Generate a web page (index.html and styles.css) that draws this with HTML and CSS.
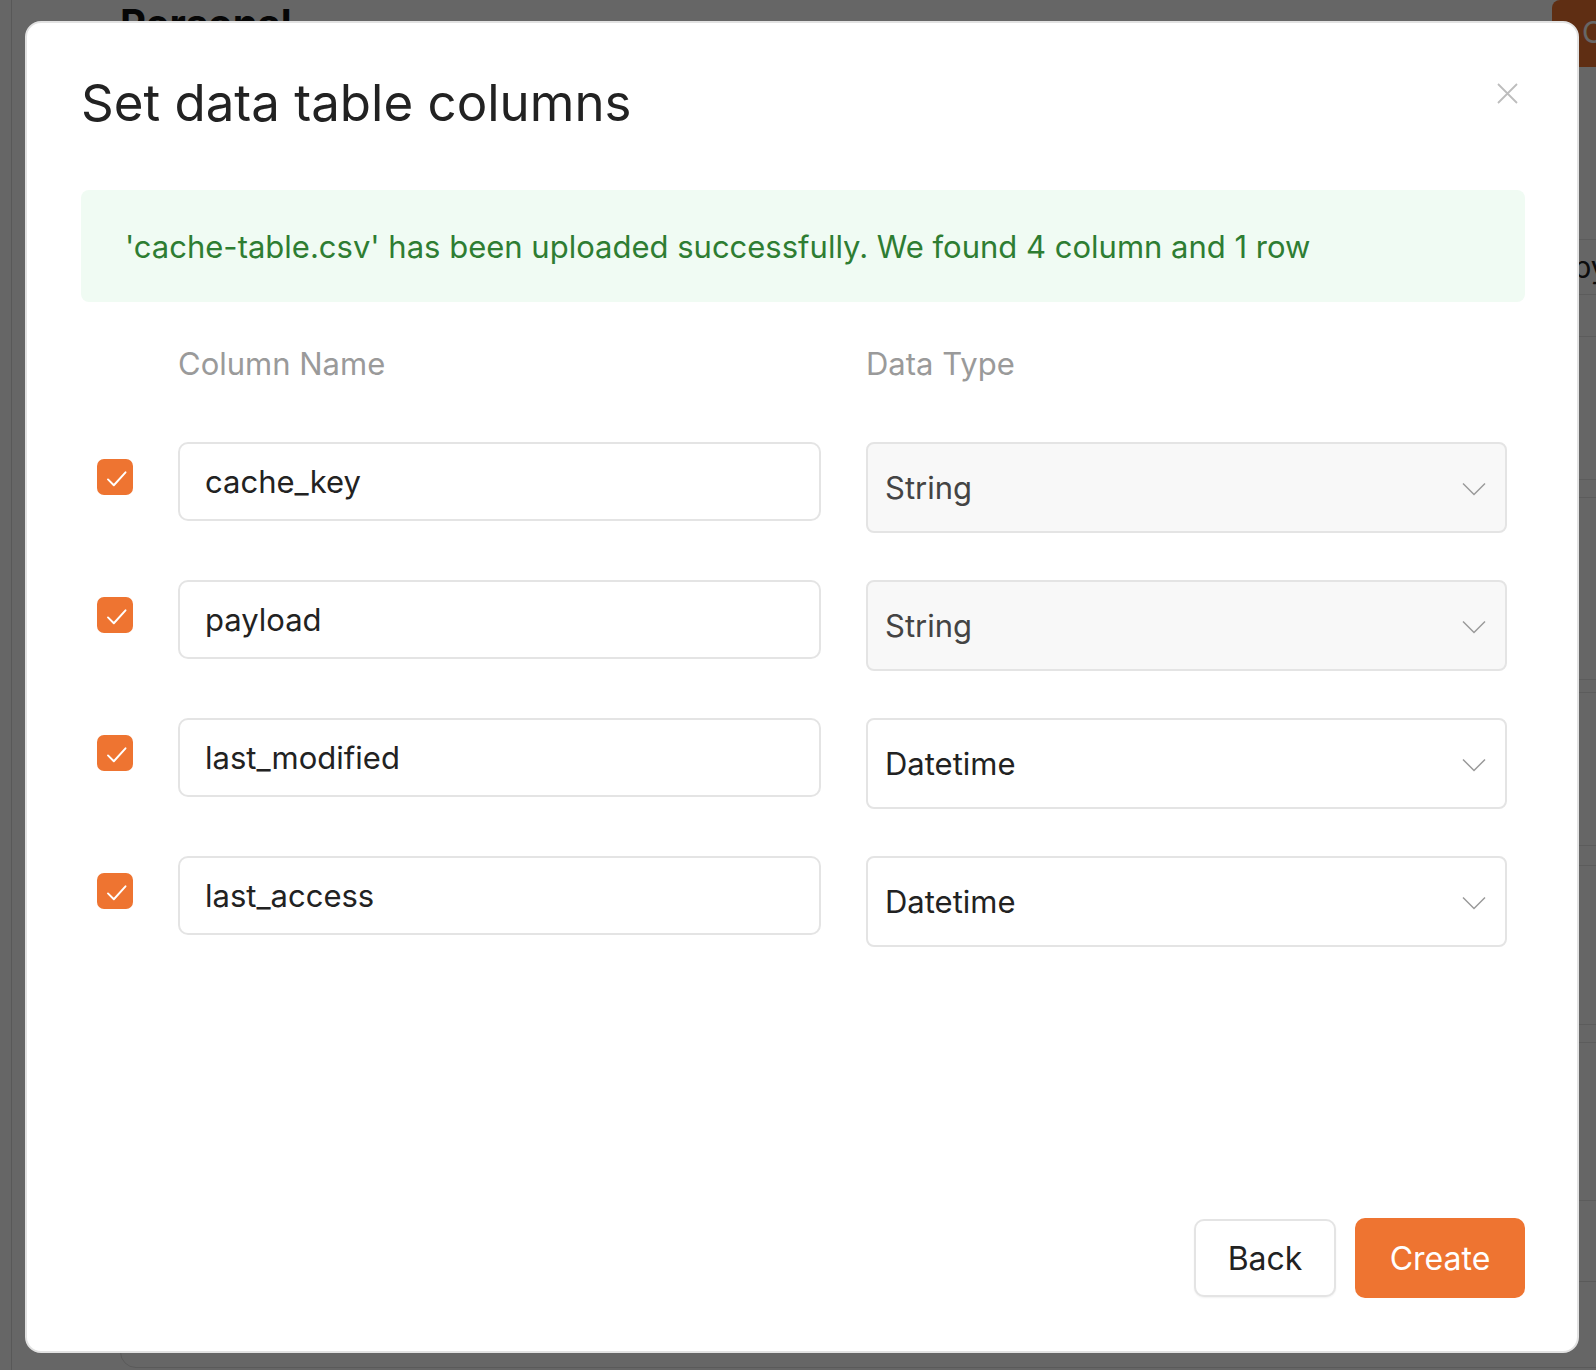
FILE: index.html
```html
<!DOCTYPE html>
<html>
<head>
    <meta charset="UTF-8">
    <title>Set data table columns</title>
    <link rel="stylesheet" href="styles.css">
</head>
<body>
<div class="page">
    <div class="side"></div>
    <div class="main">
        <div class="page-head">
            <h2>Personal</h2>
            <span class="page-btn">Create table</span>
        </div>
        <div class="bg-table">
            <div class="bg-row" style="height:54px">Copy</div>
            <div class="bg-row" style="height:41px"></div>
            <div class="bg-row" style="height:142px"></div>
            <div class="bg-row" style="height:17px"></div>
            <div class="bg-row" style="height:181px"></div>
            <div class="bg-row" style="height:12px"></div>
            <div class="bg-row" style="height:152px"></div>
            <div class="bg-row" style="height:19px"></div>
            <div class="bg-row" style="height:158px"></div>
            <div class="bg-row" style="height:17px"></div>
            <div class="bg-row" style="height:157px"></div>
            <div class="bg-row" style="height:20px"></div>
        </div>
        <div class="bg-card"></div>
    </div>
</div>

<div class="mask"></div>

<div class="modal">
    <div class="modal-head">
        <h1>Set data table columns</h1>
        <span class="close">
            <svg width="21" height="21" viewBox="0 0 21 21"><path d="M1 1L20 20M20 1L1 20" stroke="#bdbdbd" stroke-width="1.8" fill="none"/></svg>
        </span>
    </div>

    <div class="alert">'cache-table.csv' has been uploaded successfully. We found 4 column and 1 row</div>

    <div class="cols cols-head">
        <span></span>
        <span>Column Name</span>
        <span>Data Type</span>
    </div>

    <ul class="rows">
        <li class="cols">
            <span class="check"><svg width="36" height="36" viewBox="0 0 37 37"><path d="M11.3 21L17.3 27L29.3 13.7" stroke="#fff" stroke-width="2" fill="none" stroke-linecap="round" stroke-linejoin="round"/></svg></span>
            <input class="name" type="text" value="cache_key">
            <div class="type locked">String<svg width="24" height="14" viewBox="0 0 24 14"><path d="M1 1.5L12 12.5L23 1.5" stroke="#9a9a9a" stroke-width="1.5" fill="none"/></svg></div>
        </li>
        <li class="cols">
            <span class="check"><svg width="36" height="36" viewBox="0 0 37 37"><path d="M11.3 21L17.3 27L29.3 13.7" stroke="#fff" stroke-width="2" fill="none" stroke-linecap="round" stroke-linejoin="round"/></svg></span>
            <input class="name" type="text" value="payload">
            <div class="type locked">String<svg width="24" height="14" viewBox="0 0 24 14"><path d="M1 1.5L12 12.5L23 1.5" stroke="#9a9a9a" stroke-width="1.5" fill="none"/></svg></div>
        </li>
        <li class="cols">
            <span class="check"><svg width="36" height="36" viewBox="0 0 37 37"><path d="M11.3 21L17.3 27L29.3 13.7" stroke="#fff" stroke-width="2" fill="none" stroke-linecap="round" stroke-linejoin="round"/></svg></span>
            <input class="name" type="text" value="last_modified">
            <div class="type">Datetime<svg width="24" height="14" viewBox="0 0 24 14"><path d="M1 1.5L12 12.5L23 1.5" stroke="#9a9a9a" stroke-width="1.5" fill="none"/></svg></div>
        </li>
        <li class="cols">
            <span class="check"><svg width="36" height="36" viewBox="0 0 37 37"><path d="M11.3 21L17.3 27L29.3 13.7" stroke="#fff" stroke-width="2" fill="none" stroke-linecap="round" stroke-linejoin="round"/></svg></span>
            <input class="name" type="text" value="last_access">
            <div class="type">Datetime<svg width="24" height="14" viewBox="0 0 24 14"><path d="M1 1.5L12 12.5L23 1.5" stroke="#9a9a9a" stroke-width="1.5" fill="none"/></svg></div>
        </li>
    </ul>

    <div class="foot">
        <button class="btn btn-back">Back</button>
        <button class="btn btn-create">Create</button>
    </div>
</div>
</body>
</html>
```

FILE: styles.css
```css
*{margin:0;padding:0;font-family: Inter, "Noto Sans", sans-serif;}
html,body{overflow: hidden;}
body{background: #fff; color:#222;}
li{list-style: none;}

/* page behind the dialog */
.page{
    display: flex;
    width: 1800px;
    height: 1370px;
}
.side{
    flex-shrink: 0;
    width: 11px;
    border-right: 1px solid #dcdcdc;
}
.main{
    flex: 1;
    padding-left: 108px;
    display: flex;
    flex-direction: column;
}
.page-head{
    display: flex;
    justify-content: space-between;
    align-items: flex-start;
    height: 67px;
    width: 1592px;
}
.page-head h2{
    font-size: 40px;
    line-height: 48px;
    font-weight: 700;
    color: #111;
}
.page-btn{
    display: block;
    height: 67px;
    width: 160px;
    box-sizing: border-box;
    padding: 14px 0 0 30px;
    background: #ee7431;
    border-radius: 8px;
    color: #fff;
    font-size: 30px;
    white-space: nowrap;
}
.bg-table{
    margin-top: 172px;
    width: 1560px;
}
.bg-row{
    border-top: 1px solid #e6e6e6;
    padding-left: 1413px;
    font-size: 30px;
    line-height: 54px;
    color: #222;
    white-space: nowrap;
}
.bg-card{
    flex: 1;
    margin-top: 60px;
    margin-bottom: 2px;
    border: 1px solid #e0e0e0;
    border-radius: 16px;
}
.mask{
    position: fixed;
    left: 0;
    top: 0;
    right: 0;
    bottom: 0;
    background: rgba(0,0,0,.6);
}

/* dialog */
.modal{
    position: fixed;
    left: 25px;
    top: 21px;
    width: 1554px;
    height: 1332px;
    box-sizing: border-box;
    border: 2px solid #e2e2e2;
    border-radius: 16px;
    background: #fff;
    padding: 50px 52px 53px 54px;
    display: flex;
    flex-direction: column;
}
.modal-head{
    display: flex;
    justify-content: space-between;
    align-items: flex-start;
}
.modal-head h1{
    font-size: 51px;
    line-height: 59px;
    font-weight: 400;
    color: #222;
}
.close{
    display: block;
    width: 21px;
    height: 21px;
    margin: 10px 7px 0 0;
    cursor: pointer;
}
.close svg{display: block;}
.alert{
    margin-top: 58px;
    padding: 39px 44px 37px;
    background: #f0fbf3;
    border-radius: 8px;
    color: #2e7d32;
    font-size: 31px;
    line-height: 36px;
}
.cols{
    display: grid;
    grid-template-columns: 36px 643px 641px;
    column-gap: 45px;
    padding-left: 16px;
    align-items: start;
}
.cols-head{
    margin-top: 44px;
    font-size: 31px;
    line-height: 35px;
    color: #9a9a9a;
}
.rows{
    margin-top: 61px;
    display: flex;
    flex-direction: column;
    gap: 47px;
}
.check{
    display: block;
    width: 36px;
    height: 36px;
    margin-top: 17px;
    background: #ee7431;
    border-radius: 7px;
}
.check svg{display: block;}
.name{
    display: block;
    width: 100%;
    height: 79px;
    box-sizing: border-box;
    border: 2px solid #e4e4e4;
    border-radius: 10px;
    padding: 0 25px;
    font-size: 31px;
    color: #222;
    background: #fff;
    outline: none;
}
.type{
    display: flex;
    justify-content: space-between;
    align-items: center;
    height: 91px;
    box-sizing: border-box;
    border: 2px solid #e4e4e4;
    border-radius: 8px;
    padding: 0 19px 0 17px;
    font-size: 31px;
    color: #222;
    background: #fff;
}
.type.locked{
    background: #f8f8f8;
    color: #444;
}
.type svg{display: block; margin-top: 2px;}
.foot{
    margin-top: auto;
    display: flex;
    justify-content: flex-end;
    align-items: center;
    gap: 19px;
}
.btn{
    display: block;
    font-size: 32px;
    border-radius: 10px;
    cursor: pointer;
}
.btn-back{
    width: 142px;
    height: 78px;
    border: 2px solid #e4e4e4;
    background: #fff;
    color: #222;
    box-shadow: 0 1px 2px rgba(0,0,0,.06);
}
.btn-create{
    width: 170px;
    height: 80px;
    border: none;
    background: #ee7431;
    color: #fff;
}
```
